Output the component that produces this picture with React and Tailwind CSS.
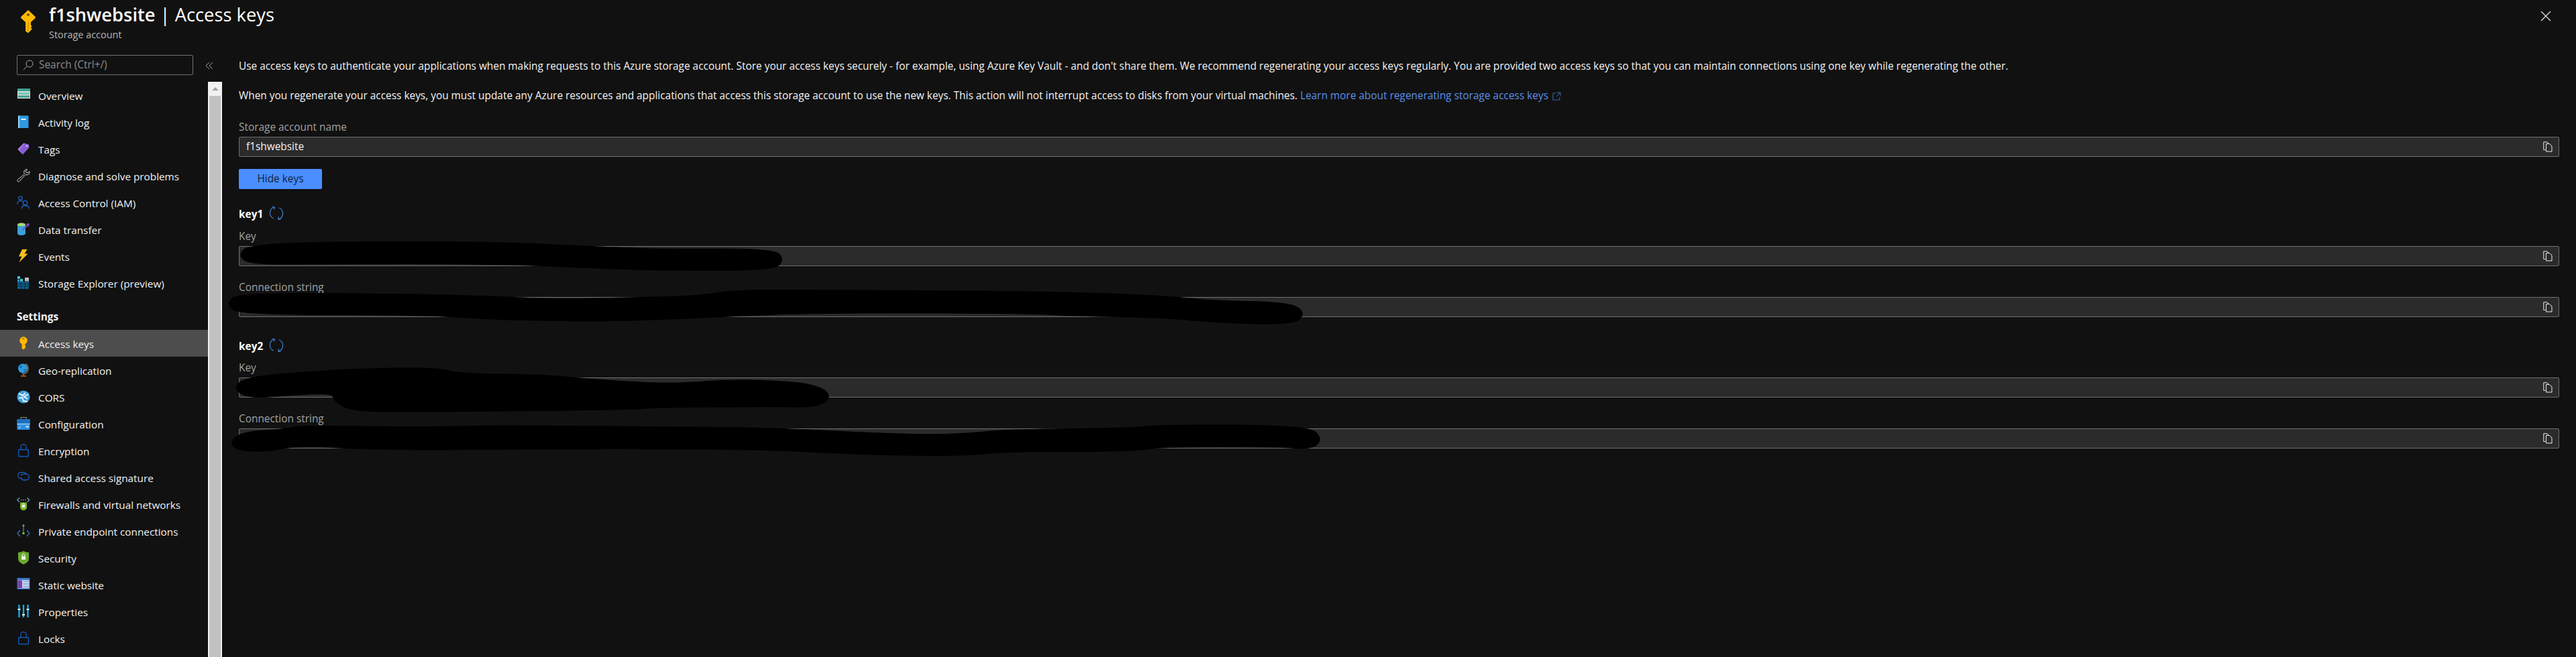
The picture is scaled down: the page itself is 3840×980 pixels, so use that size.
import React from 'react';

const font = { fontFamily: '"Open Sans", "Noto Sans", sans-serif' };

const KeyIcon = ({ size = 20 }) => (
  <svg width={size} height={size} viewBox="0 0 20 20">
    <path d="M10 0.6 L15.8 6 Q16.4 6.7 15.8 7.4 L12.2 10.6 L12.2 13 L13.2 14 L12.2 15 L13.2 16.2 L12.2 17.4 L10 19.6 L7.8 18 L7.8 10.6 L4.2 7.4 Q3.6 6.7 4.2 6 Z" fill="#ffb900" />
    <circle cx="10" cy="4.4" r="1.1" fill="#6e5212" />
    <path d="M10 10.6 L10 18" stroke="#d99a00" strokeWidth="1" />
  </svg>
);

const SmallKey = () => (
  <svg width="20" height="20" viewBox="0 0 20 20">
    <circle cx="10" cy="6" r="5.8" fill="#ffb900" />
    <path d="M7.6 10 H12.4 V13 L13.4 14 L12.4 15 L13.4 16.2 L12 17.6 L10 19.4 L7.6 17.8 Z" fill="#ffb900" />
    <rect x="8.5" y="2.6" width="3" height="1.4" rx="0.7" fill="#8a6510" />
  </svg>
);

const LockIcon = () => (
  <svg width="20" height="20" viewBox="0 0 20 20" fill="none" stroke="#1255b0" strokeWidth="1.4">
    <rect x="2.7" y="8.7" width="14.6" height="10" rx="0.6" />
    <path d="M5.8 8.7 V5 a4.2 4.2 0 0 1 8.4 0 V8.7" />
  </svg>
);

const icons = {
  overview: (
    <svg width="20" height="20" viewBox="0 0 20 20">
      <rect x="1" y="0" width="19" height="15" fill="#d8d8d8" />
      <rect x="1" y="0" width="19" height="4" fill="#3a9e8c" />
      <rect x="2" y="6" width="17" height="3" fill="#6ccbb5" />
      <rect x="2" y="10.5" width="17" height="3" fill="#3a9e8c" />
    </svg>
  ),
  log: (
    <svg width="20" height="20" viewBox="0 0 20 20">
      <rect x="2" y="0.5" width="15.5" height="18.5" rx="1" fill="#2f9ae0" />
      <rect x="2" y="0.5" width="2" height="18.5" fill="#9fd4f5" />
      <rect x="6.5" y="5" width="7" height="2" fill="#e8f4fc" />
    </svg>
  ),
  tags: (
    <svg width="20" height="20" viewBox="0 0 20 20">
      <path d="M1.5 10.5 L10.5 1.5 L18 3.5 L18.5 8 L9 18.5 Z" fill="#8a5bd6" />
      <path d="M1.5 10.5 L10.5 1.5 L12 2 L4 11 L9 18.5 Z" fill="#a883e6" />
      <circle cx="15" cy="5.5" r="1.3" fill="#d8c8f4" />
    </svg>
  ),
  wrench: (
    <svg width="20" height="20" viewBox="0 0 20 20" fill="none" stroke="#d0d0d0" strokeWidth="1">
      <path d="M13 0.8 L11 3 Q10.2 5.5 11.5 7.5 L1.2 16.2 Q0.2 17.5 1.4 18.7 Q2.6 19.6 3.8 18.6 L13 8.6 Q16 9.6 18 7.6 Q19.5 5.8 19 3.6 L16 6 L13.6 5 L13.2 3 L15.8 1 Q14.4 0.4 13 0.8 Z" />
    </svg>
  ),
  iam: (
    <svg width="20" height="20" viewBox="0 0 20 20" fill="none" stroke="#1c62c4" strokeWidth="1.3">
      <circle cx="5.5" cy="3.5" r="2.7" />
      <path d="M0.7 12.5 Q1 7.6 5.5 7.6 Q8 7.6 9 9" />
      <circle cx="12.5" cy="10.5" r="3.2" />
      <path d="M7 19.5 Q7.5 14.5 12.5 14.5 Q18 14.5 18.7 19.5" />
    </svg>
  ),
  transfer: (
    <svg width="20" height="20" viewBox="0 0 20 20">
      <path d="M1 3 V16 Q1 19 7 19 Q13 19 13 16 V3 Z" fill="#3aa0d8" />
      <ellipse cx="7" cy="3" rx="6" ry="2.6" fill="#a8d86e" />
      <path d="M9 11 L17 3" stroke="#7a4bb8" strokeWidth="1.8" />
      <path d="M13.5 2 L19 1 L18 6.5 Z" fill="#7a4bb8" />
    </svg>
  ),
  events: (
    <svg width="20" height="20" viewBox="0 0 20 20">
      <path d="M8 0 H15.5 L11.5 6.5 H16.5 L3.5 19.5 L7.5 10.5 H3 Z" fill="#fcc01e" />
    </svg>
  ),
  explorer: (
    <svg width="20" height="20" viewBox="0 0 20 20">
      <rect x="1" y="8" width="17" height="11" fill="#0f5d86" />
      <path d="M1 11.5 H18 M1 15 H18 M6.5 8 V19 M12 8 V19" stroke="#0c2c42" strokeWidth="0.9" />
      <rect x="1" y="0" width="4" height="4" fill="#42c2d8" />
      <rect x="5" y="4" width="4" height="4" fill="#42c2d8" />
      <rect x="1" y="5" width="3" height="3" fill="#2a9cc0" />
      <rect x="12" y="2" width="6" height="5.5" fill="#b8b8b8" />
    </svg>
  ),
  geo: (
    <svg width="20" height="20" viewBox="0 0 20 20">
      <circle cx="9" cy="7.5" r="7" fill="#2f9be0" />
      <path d="M4 3 Q8 2 9 5 Q7 8 4 7 Z M10 9 L14 8 L13 13 L11 13 Z" fill="#1a78bb" />
      <path d="M13 0.6 A8.4 8.4 0 0 1 13 15 Q11 16 8 16" fill="none" stroke="#b08450" strokeWidth="1.2" />
      <path d="M10 16 V18 M6 19 H14" stroke="#b06a28" strokeWidth="1.5" />
    </svg>
  ),
  cors: (
    <svg width="20" height="20" viewBox="0 0 20 20">
      <circle cx="10" cy="10" r="9.6" fill="#3f9ed8" />
      <path d="M3 5 L9 8 L13 4 M17 6 L11 10 L16 13 M3 12 L8 11 L10 16 L16 17" fill="none" stroke="#e6f4fb" strokeWidth="2" />
    </svg>
  ),
  config: (
    <svg width="20" height="20" viewBox="0 0 20 20">
      <rect x="6" y="0.6" width="8" height="4" fill="none" stroke="#7d7d7d" strokeWidth="1.2" />
      <rect x="0.5" y="3.5" width="19" height="15.5" rx="0.6" fill="#2f8fe0" />
      <rect x="0.5" y="3.5" width="19" height="6" fill="#1e6fbd" />
      <path d="M0.5 10.5 H19.5" stroke="#a8d6f5" strokeWidth="1.2" />
      <path d="M2 16 L7 13 L4 17 Z M13 13 H18 V16 H14 Z" fill="#9ed2f3" />
    </svg>
  ),
  lock: <LockIcon />,
  sas: (
    <svg width="20" height="20" viewBox="0 0 20 20" fill="none" stroke="#1c62c4" strokeWidth="1.3">
      <path d="M8 11.5 H6 a4.4 4.4 0 0 1 0 -8.8 H10 a4.4 4.4 0 0 1 4 2.6" />
      <path d="M6 7.4 a4.4 4.4 0 0 1 4 -2.2 H14 a4.4 4.4 0 0 1 0 8.8 H10 a4.4 4.4 0 0 1 -3.6 -2" />
    </svg>
  ),
  firewall: (
    <svg width="20" height="20" viewBox="0 0 20 20">
      <path d="M4 0.5 L0.8 3.8 L4 7 M15.5 0.5 L18.8 3.8 L15.5 7" fill="none" stroke="#7fb0d0" strokeWidth="1.1" />
      <path d="M6 3.8 H7.2 M9.2 3.8 H10.4 M12.4 3.8 H13.6" stroke="#8cc63f" strokeWidth="1.6" />
      <path d="M5 7.5 H15 V15 Q15 18 10 19.6 Q5 18 5 15 Z" fill="#76b82a" />
      <rect x="7.8" y="11" width="4.4" height="4" fill="#f0f6e4" />
      <path d="M8.7 11 V9.8 a1.3 1.3 0 0 1 2.6 0 V11" fill="none" stroke="#f0f6e4" strokeWidth="0.8" />
    </svg>
  ),
  endpoint: (
    <svg width="20" height="20" viewBox="0 0 20 20" fill="none">
      <path d="M5 9 L1 13.5 L5 18 M15 9 L19 13.5 L15 18" stroke="#3a78b8" strokeWidth="1.2" />
      <path d="M10 2 V13" stroke="#6aa5c8" strokeWidth="1" />
      <circle cx="10" cy="1.8" r="1.5" fill="#6aa5c8" />
      <circle cx="10" cy="13.5" r="1.8" fill="#76b82a" />
    </svg>
  ),
  shield: (
    <svg width="20" height="20" viewBox="0 0 20 20">
      <path d="M10 0 Q14 2 18 2 V11 Q18 17 10 20 Q2 17 2 11 V2 Q6 2 10 0 Z" fill="#6aa82e" />
      <rect x="7" y="7.5" width="6" height="5.2" rx="0.5" fill="#eef5e2" />
      <path d="M8.2 7.5 V6 a1.8 1.8 0 0 1 3.6 0 V7.5" fill="none" stroke="#eef5e2" strokeWidth="1" />
    </svg>
  ),
  website: (
    <svg width="20" height="20" viewBox="0 0 20 20">
      <rect x="0.5" y="0" width="19" height="17" fill="#3274c8" />
      <rect x="2" y="3" width="16.5" height="12.5" fill="#c4d4ee" />
      <rect x="2" y="3.5" width="6" height="11.5" fill="#7c3fa8" />
      <path d="M9.5 5 H18 M9.5 9 H18 M9.5 13 H18" stroke="#8ea4cc" strokeWidth="1.7" />
    </svg>
  ),
  props: (
    <svg width="20" height="20" viewBox="0 0 20 20">
      <path d="M3.5 0 V19 M10 0 V19 M16.5 0 V19" stroke="#1ba9dc" strokeWidth="2.4" />
      <rect x="1.5" y="6" width="4" height="2" fill="#eaf6fb" />
      <rect x="8" y="14" width="4" height="2" fill="#eaf6fb" />
      <rect x="14.5" y="6" width="4" height="2" fill="#eaf6fb" />
    </svg>
  ),
  key: <SmallKey />,
};

const navTop = [
  ['Overview', 'overview'],
  ['Activity log', 'log'],
  ['Tags', 'tags'],
  ['Diagnose and solve problems', 'wrench'],
  ['Access Control (IAM)', 'iam'],
  ['Data transfer', 'transfer'],
  ['Events', 'events'],
  ['Storage Explorer (preview)', 'explorer'],
];

const navSettings = [
  ['Access keys', 'key'],
  ['Geo-replication', 'geo'],
  ['CORS', 'cors'],
  ['Configuration', 'config'],
  ['Encryption', 'lock'],
  ['Shared access signature', 'sas'],
  ['Firewalls and virtual networks', 'firewall'],
  ['Private endpoint connections', 'endpoint'],
  ['Security', 'shield'],
  ['Static website', 'website'],
  ['Properties', 'props'],
  ['Locks', 'lock'],
];

const NavRow = ({ label, icon, active }) => (
  <div className={`h-10 shrink-0 flex items-center pl-[25px] gap-3 text-[15.3px] text-[#f2f2f2] whitespace-nowrap ${active ? 'bg-[#4d4d4d]' : ''}`}>
    <span className="w-5 h-5 flex items-center justify-center shrink-0">{icons[icon]}</span>
    <span className="pt-[2px]">{label}</span>
  </div>
);

const CopyIcon = () => (
  <svg width="14" height="16" viewBox="0 0 14 16" fill="none" stroke="#f0f0f0" strokeWidth="1">
    <path d="M3.5 12.5 H0.8 V0.8 H6 L8 3" />
    <path d="M4.5 3.5 H9.5 L13 7 V15 H4.5 Z" />
  </svg>
);

const RefreshIcon = () => (
  <svg className="-mt-[5px]" width="22" height="22" viewBox="0 0 22 22" fill="none" stroke="#3f7fd0" strokeWidth="1.2">
    <path d="M8 2 A9 9 0 0 0 7 19" />
    <path d="M14 20 A9 9 0 0 0 15 3" />
    <path d="M4.5 1.5 L8.3 2 L7.5 5.5" />
    <path d="M17.5 20.5 L13.7 20 L14.5 16.5" />
  </svg>
);

const Field = ({ label, value, className }) => (
  <div className={className}>
    <div className="h-5 flex items-center text-[15.4px] text-[#a0a0a0] mb-1">{label}</div>
    <div className="h-[30px] flex items-center justify-between bg-[#2b2b2b] border border-[#6e6e6e] rounded-[2px] pl-[10px] pr-[9px] text-[15.4px] text-[#f2f2f2]">
      <span>{value}</span>
      <CopyIcon />
    </div>
  </div>
);

const KeyHeading = ({ label, className }) => (
  <div className={`flex items-center gap-[9px] h-[22px] ${className}`}>
    <span className="text-[15.4px] font-bold text-white">{label}</span>
    <RefreshIcon />
  </div>
);

// the scribbled-out secrets lying over the fields, as x,y outlines
const blobs = [
  [[357,380],[371,367],[488,362],[728,362],[861,368],[973,373],[1152,372],[1168,387],[1152,402],[973,402],[856,397],[728,392],[488,392],[371,393]],
  [[339,453],[356,438],[606,440],[728,443],[830,448],[948,445],[1039,443],[1095,434],[1198,434],[1548,436],[1731,442],[1806,450],[1921,452],[1945,467],[1927,483],[1812,480],[1731,472],[1599,470],[1542,466],[1198,465],[1044,473],[897,478],[830,477],[728,475],[626,468],[356,468]],
  [[348,578],[371,563],[473,555],[524,552],[647,549],[687,559],[805,560],[881,567],[973,573],[1034,572],[1075,568],[1157,569],[1215,575],[1239,590],[1220,606],[1157,605],[993,606],[922,610],[606,613],[524,612],[499,597],[496,585],[432,588],[371,593]],
  [[345,657],[366,645],[422,642],[448,636],[565,638],[667,638],[743,636],[830,637],[1009,638],[1157,640],[1272,646],[1381,650],[1444,648],[1502,642],[1686,640],[1731,635],[1950,636],[1970,655],[1955,669],[1904,665],[1731,665],[1686,672],[1502,672],[1444,678],[1358,678],[1272,676],[1163,670],[1009,668],[830,668],[565,670],[442,663],[397,673],[351,670]],
];

// rounds an outline by curving through the midpoints of its edges
const smoothPath = (pts) => {
  const mid = (a, b) => [(a[0] + b[0]) / 2, (a[1] + b[1]) / 2];
  const start = mid(pts[pts.length - 1], pts[0]);
  let d = `M${start[0]} ${start[1]}`;
  pts.forEach((p, i) => {
    const m = mid(p, pts[(i + 1) % pts.length]);
    d += ` Q${p[0]} ${p[1]} ${m[0]} ${m[1]}`;
  });
  return `${d} Z`;
};

const App = () => {
  return (
    <div className="relative w-[3840px] h-[980px] overflow-hidden bg-[#111111] flex flex-col" style={font}>
      <header className="h-[82px] shrink-0 flex items-start pl-[24px] pr-[37px]">
        <div className="mt-[14px] w-[49px] shrink-0">
          <KeyIcon size={36} />
        </div>
        <div className="flex-1">
          <div className="text-[27.3px] leading-[36px] mt-[4px] text-white">
            <span className="font-semibold">f1shwebsite</span> | Access keys
          </div>
          <div className="text-[14.4px] leading-[20px] mt-[2px] text-[#b5b5b5]">Storage account</div>
        </div>
        <svg className="mt-[16px]" width="16" height="16" viewBox="0 0 16 16" stroke="#e6e6e6" strokeWidth="1.2">
          <path d="M1 1 L15 15 M15 1 L1 15" />
        </svg>
      </header>

      <div className="flex-1 flex min-h-0">
        <aside className="w-[331px] shrink-0 flex flex-col">
          <div className="h-[40px] shrink-0 flex items-start pl-[25px]">
            <div className="w-[263px] h-[30px] flex items-center gap-2 px-2 border border-[#707070] rounded-[2px] text-[15.4px] text-[#8c8c8c]">
              <svg width="16" height="16" viewBox="0 0 16 16" fill="none" stroke="#a8a8a8" strokeWidth="1">
                <circle cx="10" cy="6" r="5" />
                <path d="M6.4 9.6 L1 15" />
              </svg>
              <span>Search (Ctrl+/)</span>
            </div>
            <svg className="ml-[18px] mt-[10px]" width="12" height="12" viewBox="0 0 12 12" fill="none" stroke="#a0a0a0" strokeWidth="1">
              <path d="M6 1 L1 6 L6 11 M11 1 L6 6 L11 11" />
            </svg>
          </div>
          <div className="flex-1 flex min-h-0">
            <nav className="w-[310px] shrink-0 flex flex-col overflow-hidden">
              {navTop.map(([label, icon]) => (
                <NavRow key={label} label={label} icon={icon} />
              ))}
              <div className="h-[50px] shrink-0 flex items-start pt-[20px] pl-[25px] text-[15.4px] leading-[22px] font-bold text-[#f2f2f2]">
                Settings
              </div>
              {navSettings.map(([label, icon]) => (
                <NavRow key={label} label={label} icon={icon} active={label === 'Access keys'} />
              ))}
            </nav>
            <div className="w-[21px] shrink-0 flex flex-col bg-[#f1f1f1] px-[2px]">
              <div className="h-[21px] shrink-0 flex items-center justify-center">
                <div className="w-0 h-0 border-x-[5px] border-x-transparent border-b-[5px] border-b-[#a3a3a3]" />
              </div>
              <div className="flex-1 bg-[#c1c1c1]" />
            </div>
          </div>
        </aside>

        <main className="flex-1 min-w-0 pl-[25px] pr-[25px] pt-[5px] text-[15.4px] text-[#f2f2f2]">
          <p className="h-6 leading-6 whitespace-nowrap">
            Use access keys to authenticate your applications when making requests to this Azure storage account. Store your access keys securely - for example, using Azure Key Vault - and don't share them. We recommend regenerating your access keys regularly. You are provided two access keys so that you can maintain connections using one key while regenerating the other.
          </p>
          <p className="h-6 leading-6 mt-5 flex items-center gap-[6px] whitespace-nowrap">
            <span>
              When you regenerate your access keys, you must update any Azure resources and applications that access this storage account to use the new keys. This action will not interrupt access to disks from your virtual machines.{' '}
              <span className="text-[#5a8fe8]">Learn more about regenerating storage access keys</span>
            </span>
            <svg width="13" height="13" viewBox="0 0 13 13" fill="none" stroke="#3f6fb8" strokeWidth="1">
              <path d="M5 2 H1 V12 H11 V8 M7 1 H12 V6 M12 1 L6 7" />
            </svg>
          </p>
          <Field className="mt-[25px]" label="Storage account name" value="f1shwebsite" />
          <button className="mt-[18px] w-[124px] h-[30px] block rounded-[2px] bg-[#4a8eff] text-[15.4px] text-[#0d1f3d]">Hide keys</button>
          <KeyHeading className="mt-[27px]" label="key1" />
          <Field className="mt-3" label="Key" value="" />
          <Field className="mt-[22px]" label="Connection string" value="" />
          <KeyHeading className="mt-[33px]" label="key2" />
          <Field className="mt-[11px]" label="Key" value="" />
          <Field className="mt-[22px]" label="Connection string" value="" />
        </main>
      </div>

      <svg className="absolute left-0 top-0 pointer-events-none" width="3840" height="980" viewBox="0 0 3840 980">
        {blobs.map((pts) => (
          <path key={pts[0].join()} d={smoothPath(pts)} fill="#000" stroke="#000" strokeWidth="4" />
        ))}
      </svg>
    </div>
  );
};

export default App;
